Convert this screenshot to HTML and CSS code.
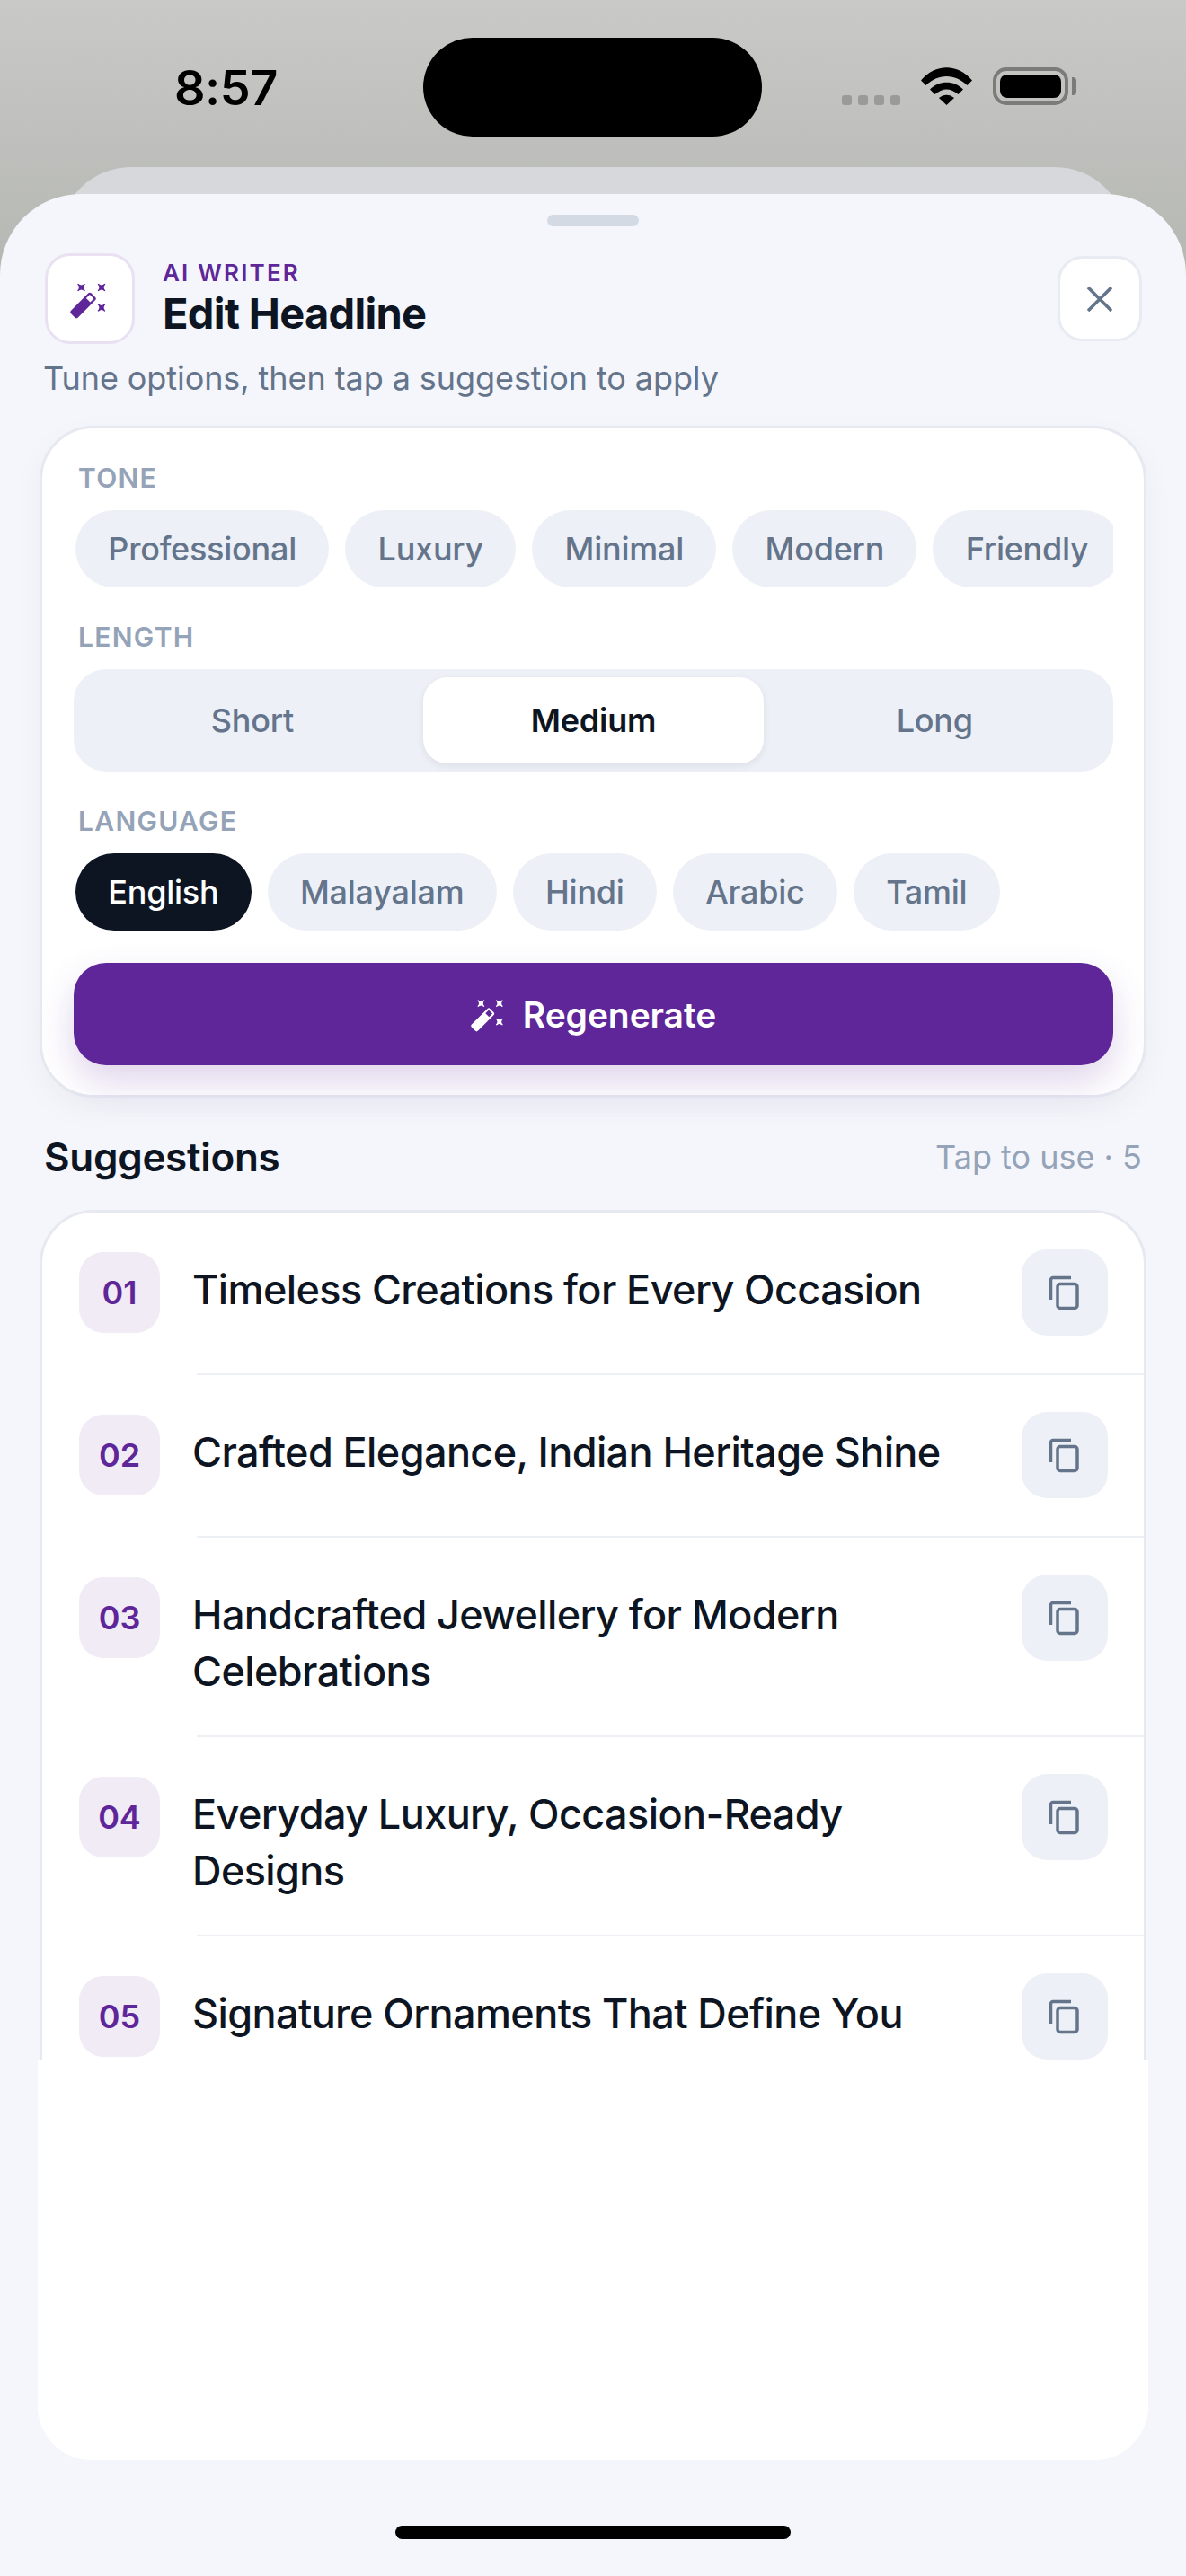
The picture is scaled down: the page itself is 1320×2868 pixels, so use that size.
FILE: index.html
```html
<!DOCTYPE html>
<html>
<head>
    <meta charset="utf-8">
    <meta name="viewport" content="width=device-width, initial-scale=1">
    <title>Edit Headline</title>
    <link rel="stylesheet" href="styles.css">
</head>
<body>
    <svg class="icon-defs" width="0" height="0">
        <defs>
            <symbol id="icon-wand" viewBox="0 0 44 44">
                <path d="M12.5 3.500Q12.5 9 18 9Q12.5 9 12.5 14.500Q12.5 9 7 9Q12.5 9 12.5 3.500Z" transform="rotate(45 12.5 9)" stroke="currentColor" stroke-width="1.200"/>
                <path d="M35 3.500Q35 9 40.500 9Q35 9 35 14.500Q35 9 29.500 9Q35 9 35 3.500Z" transform="rotate(45 35 9)" stroke="currentColor" stroke-width="1.200"/>
                <path d="M35 26Q35 31.5 40.500 31.5Q35 31.5 35 37Q35 31.5 29.500 31.5Q35 31.5 35 26Z" transform="rotate(45 35 31.5)" stroke="currentColor" stroke-width="1.200"/>
                <path transform="rotate(-45 14.5 29)" fill-rule="evenodd" d="M1 23.5H28a2.5 2.5 0 0 1 2.5 2.5V32a2.5 2.5 0 0 1-2.5 2.5H1A2.5 2.5 0 0 1-1.5 32V26A2.5 2.5 0 0 1 1 23.5ZM22.500 25.800V32.200H28.200V25.800Z"/>
            </symbol>
            <symbol id="icon-copy" viewBox="0 0 48 48">
                <path d="M8.500 32V10a2.500 2.500 0 0 1 2.500-2.500H31" fill="none" stroke="currentColor" stroke-width="3.500"/>
                <rect x="16" y="14.500" width="22" height="27" rx="3" fill="none" stroke="currentColor" stroke-width="3.500"/>
            </symbol>
        </defs>
    </svg>

    <div class="screen">
        <div class="status-bar">
            <span class="status-bar__time">8:57</span>
            <div class="status-bar__island"></div>
            <div class="status-bar__signal">
                <span class="status-bar__dot"></span>
                <span class="status-bar__dot"></span>
                <span class="status-bar__dot"></span>
                <span class="status-bar__dot"></span>
            </div>
            <svg class="status-bar__wifi" viewBox="0 0 57 42">
                <path d="M0 14.500C16-4.500 41-4.500 57 14.500L51.500 20C38 6.500 19 6.500 5.500 20Z"/>
                <path d="M10 24.500C20 14 37 14 47 24.500L41.500 30C33 22.500 24 22.500 15.500 30Z"/>
                <path d="M20 34C25 29.500 32 29.500 37 34L28.500 42Z"/>
            </svg>
            <div class="status-bar__battery">
                <div class="status-bar__battery-level"></div>
            </div>
            <div class="status-bar__battery-cap"></div>
        </div>
        <div class="back-sheet"></div>

        <main class="sheet">
            <div class="sheet__handle"></div>

            <header class="sheet-header">
                <div class="sheet-header__icon">
                    <svg class="wand wand--large"><use href="#icon-wand"/></svg>
                </div>
                <div class="sheet-header__text">
                    <div class="sheet-header__eyebrow">AI WRITER</div>
                    <div class="sheet-header__title">Edit Headline</div>
                </div>
                <button class="sheet-header__close">
                    <svg class="sheet-header__close-icon" viewBox="0 0 30 30">
                        <path d="M2 2L28 28M28 2L2 28"/>
                    </svg>
                </button>
            </header>
            <p class="sheet__hint">Tune options, then tap a suggestion to apply</p>

            <section class="options">
                <div class="options__label options__label--first">TONE</div>
                <div class="chips chips--scroll">
                    <span class="chip">Professional</span>
                    <span class="chip">Luxury</span>
                    <span class="chip">Minimal</span>
                    <span class="chip">Modern</span>
                    <span class="chip">Friendly</span>
                </div>

                <div class="options__label">LENGTH</div>
                <div class="segments">
                    <span class="segments__item">Short</span>
                    <span class="segments__item segments__item--active">Medium</span>
                    <span class="segments__item">Long</span>
                </div>

                <div class="options__label">LANGUAGE</div>
                <div class="chips">
                    <span class="chip chip--active">English</span>
                    <span class="chip">Malayalam</span>
                    <span class="chip">Hindi</span>
                    <span class="chip">Arabic</span>
                    <span class="chip">Tamil</span>
                </div>

                <button class="regenerate">
                    <svg class="wand wand--small"><use href="#icon-wand"/></svg>
                    <span>Regenerate</span>
                </button>
            </section>

            <div class="suggestions-head">
                <span class="suggestions-head__title">Suggestions</span>
                <span class="suggestions-head__meta">Tap to use · 5</span>
            </div>

            <section class="suggestions">
                <div class="suggestion">
                    <span class="suggestion__num">01</span>
                    <span class="suggestion__text">Timeless Creations for Every Occasion</span>
                    <button class="suggestion__copy"><svg class="copy-icon"><use href="#icon-copy"/></svg></button>
                </div>
                <div class="suggestions__divider"></div>
                <div class="suggestion">
                    <span class="suggestion__num">02</span>
                    <span class="suggestion__text">Crafted Elegance, Indian Heritage Shine</span>
                    <button class="suggestion__copy"><svg class="copy-icon"><use href="#icon-copy"/></svg></button>
                </div>
                <div class="suggestions__divider"></div>
                <div class="suggestion">
                    <span class="suggestion__num">03</span>
                    <span class="suggestion__text">Handcrafted Jewellery for Modern Celebrations</span>
                    <button class="suggestion__copy"><svg class="copy-icon"><use href="#icon-copy"/></svg></button>
                </div>
                <div class="suggestions__divider"></div>
                <div class="suggestion">
                    <span class="suggestion__num">04</span>
                    <span class="suggestion__text">Everyday Luxury, Occasion-Ready Designs</span>
                    <button class="suggestion__copy"><svg class="copy-icon"><use href="#icon-copy"/></svg></button>
                </div>
                <div class="suggestions__divider"></div>
                <div class="suggestion">
                    <span class="suggestion__num">05</span>
                    <span class="suggestion__text">Signature Ornaments That Define You</span>
                    <button class="suggestion__copy"><svg class="copy-icon"><use href="#icon-copy"/></svg></button>
                </div>
            </section>
            <div class="suggestions-fade"></div>

            <div class="home-indicator"></div>
        </main>
    </div>
</body>
</html>
```

FILE: styles.css
```css
* {
    box-sizing: border-box;
}

body {
    margin: 0;
    font-family: Inter, "Liberation Sans", sans-serif;
    background-color: #f4f6fb;
}

button {
    font-family: inherit;
    border: 0;
    padding: 0;
}

.icon-defs {
    display: block;
    height: 0;
}

.screen {
    width: 1320px;
    height: 2868px;
    overflow: hidden;
    background: linear-gradient(#c9c9c7 0, #b6b8b3 290px);
}

/* status bar */
.status-bar {
    display: flex;
    align-items: flex-start;
    height: 186px;
    padding-top: 42px;
}
.status-bar__time {
    width: 471px;
    margin-top: 24px;
    padding-left: 194px;
    font-size: 54px;
    line-height: 64px;
    font-weight: 600;
    letter-spacing: -0.500px;
    color: #000;
}
.status-bar__island {
    width: 377px;
    height: 110px;
    border-radius: 55px;
    background-color: #000;
}
.status-bar__signal {
    display: flex;
    gap: 7px;
    margin: 64px 0 0 89px;
}
.status-bar__dot {
    width: 11px;
    height: 11px;
    border-radius: 3px;
    background-color: #9a9b98;
}
.status-bar__wifi {
    width: 57px;
    height: 42px;
    margin: 33px 0 0 23px;
}
.status-bar__battery {
    width: 84px;
    height: 42px;
    margin: 33px 0 0 23px;
    padding: 4px;
    border: 4px solid #7b7c7a;
    border-radius: 15px;
}
.status-bar__battery-level {
    height: 100%;
    border-radius: 8px;
    background-color: #000;
}
.status-bar__battery-cap {
    width: 5px;
    height: 20px;
    margin: 44px 0 0 4px;
    border-radius: 0 4px 4px 0;
    background-color: #7b7c7a;
}

.back-sheet {
    height: 110px;
    margin: 0 66px -80px;
    border-radius: 80px 80px 0 0;
    background-color: #d6d8dc;
}

/* sheet */
.sheet {
    position: relative;
    height: 2652px;
    padding: 23px 44px 0;
    border-radius: 90px 90px 0 0;
    background-color: #f4f6fb;
}
.sheet__handle {
    width: 102px;
    height: 13px;
    margin: 0 auto 30px;
    border-radius: 7px;
    background-color: #d3dae4;
}
.sheet__hint {
    margin: 11px 0 26px 4px;
    font-size: 36px;
    line-height: 54px;
    letter-spacing: -0.080px;
    color: #64748b;
}

.sheet-header {
    display: flex;
    align-items: center;
    height: 101px;
    padding: 0 5px 0 6px;
}
.sheet-header__icon {
    display: flex;
    align-items: center;
    justify-content: center;
    width: 100px;
    height: 101px;
    border: 3px solid #e9e1f2;
    border-radius: 28px;
    background-color: #fff;
    color: #5e2699;
}
.sheet-header__text {
    flex: 1;
    margin-left: 31px;
}
.sheet-header__eyebrow {
    font-size: 26px;
    line-height: 30px;
    font-weight: 600;
    letter-spacing: 2.200px;
    color: #5e2699;
}
.sheet-header__title {
    margin-top: 2px;
    font-size: 47px;
    line-height: 56px;
    font-weight: 700;
    letter-spacing: -0.700px;
    color: #0d1522;
}
.sheet-header__close {
    display: flex;
    align-items: center;
    justify-content: center;
    width: 94px;
    height: 95px;
    border: 3px solid #e8ebf2;
    border-radius: 28px;
    background-color: #fff;
}
.sheet-header__close-icon {
    width: 30px;
    height: 30px;
    fill: none;
    stroke: #64748b;
    stroke-width: 3.600;
}

.wand {
    display: block;
    fill: currentColor;
}
.wand--large {
    width: 44px;
    height: 44px;
}
.wand--small {
    width: 40px;
    height: 40px;
}

/* options card */
.options {
    height: 748px;
    padding: 37px 34px 0 37px;
    border: 3px solid #e6e9f0;
    border-radius: 60px;
    background-color: #fff;
    box-shadow: 0 12px 36px rgba(40, 50, 80, 0.04);
}
.options__label {
    margin: 37px 0 18px 3px;
    font-size: 30px;
    line-height: 36px;
    font-weight: 600;
    letter-spacing: 1.300px;
    color: #94a3b8;
}
.options__label--first {
    margin-top: 0;
}

.chips {
    display: flex;
    gap: 18px;
}
.chips--scroll {
    overflow: hidden;
}
.chip {
    flex-shrink: 0;
    height: 86px;
    padding: 0 36.300px;
    border-radius: 43px;
    font-size: 36px;
    line-height: 86px;
    font-weight: 500;
    letter-spacing: -0.250px;
    color: #64748b;
    background-color: #edf0f6;
}
.chip--active {
    color: #fff;
    background-color: #0d1522;
}

.segments {
    display: flex;
    height: 114px;
    margin-left: -2px;
    padding: 9px;
    border-radius: 36px;
    background-color: #edf0f6;
}
.segments__item {
    flex: 1;
    border-radius: 27px;
    font-size: 36px;
    line-height: 96px;
    font-weight: 500;
    letter-spacing: -0.250px;
    text-align: center;
    color: #64748b;
}
.segments__item--active {
    font-weight: 600;
    color: #0d1522;
    background-color: #fff;
    box-shadow: 0 3px 9px rgba(30, 40, 70, 0.08);
}

.regenerate {
    display: flex;
    align-items: center;
    justify-content: center;
    gap: 18px;
    width: 1157px;
    height: 114px;
    margin: 36px 0 0 -2px;
    border-radius: 36px;
    font-size: 39px;
    font-weight: 600;
    letter-spacing: -0.100px;
    color: #fff;
    background-color: #5e2699;
    box-shadow: 0 18px 42px rgba(94, 38, 153, 0.2);
}

/* suggestions */
.suggestions-head {
    display: flex;
    align-items: center;
    justify-content: space-between;
    height: 54px;
    margin: 39px 5px 32px 5px;
}
.suggestions-head__title {
    font-size: 44px;
    font-weight: 600;
    letter-spacing: -0.300px;
    color: #0d1522;
}
.suggestions-head__meta {
    font-size: 36px;
    color: #94a3b8;
}

.suggestions {
    height: 947px;
    overflow: hidden;
    border: 3px solid #e6e9f0;
    border-bottom: 0;
    border-radius: 60px 60px 0 0;
    background-color: #fff;
}
.suggestions__divider {
    height: 2px;
    margin-left: 172px;
    background-color: #edf0f5;
}
.suggestion {
    display: flex;
    align-items: flex-start;
    padding: 41px 40px 42px 41px;
}
.suggestion__num {
    flex-shrink: 0;
    width: 90px;
    height: 90px;
    margin-top: 3px;
    border-radius: 27px;
    font-size: 36px;
    line-height: 90px;
    font-weight: 600;
    text-align: center;
    color: #5e2699;
    background-color: #f1ebf6;
}
.suggestion__text {
    flex: 1;
    margin: 13px 60px -2px 36px;
    font-size: 45px;
    line-height: 63px;
    font-weight: 500;
    letter-spacing: -0.600px;
    color: #0d1522;
}
.suggestion__copy {
    flex-shrink: 0;
    display: flex;
    align-items: center;
    justify-content: center;
    width: 96px;
    height: 96px;
    border-radius: 28px;
    color: #64748b;
    background-color: #edf0f6;
}
.copy-icon {
    width: 48px;
    height: 48px;
}

.suggestions-fade {
    height: 445px;
    margin: 0 -2px;
    border-radius: 0 0 60px 60px;
    background-color: #fff;
}

.home-indicator {
    width: 440px;
    height: 15px;
    margin: 73px auto 0;
    border-radius: 8px;
    background-color: #000;
}
```
